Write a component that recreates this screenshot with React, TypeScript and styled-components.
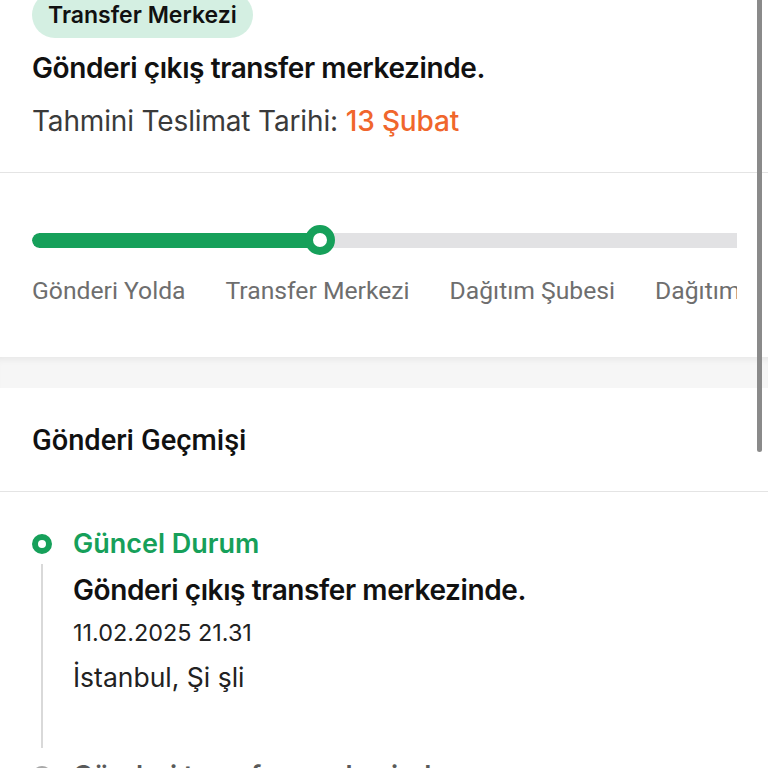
import React from "react";
import styled, { createGlobalStyle } from "styled-components";

const GlobalStyle = createGlobalStyle`
  html, body {
    margin: 0;
    padding: 0;
    background: #ffffff;
    overflow: hidden;
  }
  body {
    font-family: "Inter", "Noto Sans", sans-serif;
    color: #111111;
  }
`;

const steps = ["Gönderi Yolda", "Transfer Merkezi", "Dağıtım Şubesi", "Dağıtımda", "Teslim Edildi"];

const Page = styled.div`
  position: relative;
  width: 768px;
  height: 776px;
  margin-top: -8px;
  overflow: hidden;
  background: #ffffff;
`;

const Summary = styled.section`
  display: flex;
  flex-direction: column;
  align-items: flex-start;
  padding: 0 32px 36px;
  border-bottom: 1px solid #e4e4e4;
`;

const Badge = styled.span`
  display: inline-block;
  height: 46px;
  line-height: 46px;
  padding: 0 16px;
  border-radius: 23px;
  background: #d4efe2;
  font-size: 23px;
  font-weight: 600;
  color: #111111;
`;

const Title = styled.h2`
  margin: 15px 0 0;
  font-size: 28px;
  line-height: 30px;
  letter-spacing: -0.4px;
  font-weight: 600;
  color: #111111;
`;

const EtaLine = styled.p`
  margin: 23px 0 0;
  font-size: 28px;
  line-height: 30px;
  letter-spacing: -0.15px;
  font-weight: 400;
  color: #3a3a3a;
`;

const EtaDate = styled.span`
  color: #f0662c;
  font-weight: 500;
`;

const StepperSection = styled.section`
  padding: 52px 31px 52px 32px;
`;

const TrackArea = styled.div`
  position: relative;
  height: 30px;
  display: flex;
  align-items: center;
`;

const Track = styled.div`
  width: 100%;
  height: 15px;
  border-radius: 8px 0 0 8px;
  background: #e2e2e4;
  overflow: hidden;
`;

const TrackFill = styled.div`
  height: 100%;
  background: #16a05a;
  border-radius: 8px 0 0 8px;
`;

const Knob = styled.span`
  position: absolute;
  top: 0;
  width: 30px;
  height: 30px;
  box-sizing: border-box;
  border-radius: 50%;
  border: 8px solid #16a05a;
  background: #ffffff;
`;

const StepLabels = styled.div`
  display: flex;
  gap: 40px;
  margin-top: 22px;
  overflow: hidden;
  white-space: nowrap;
`;

const StepLabel = styled.span`
  flex: none;
  font-family: "Roboto", "Inter", sans-serif;
  font-size: 24.7px;
  line-height: 28px;
  color: #6e6e6e;
`;

const Band = styled.div`
  height: 31px;
  background: #f6f6f6;
  box-shadow: inset 0 7px 7px -5px rgba(0, 0, 0, 0.07);
`;

const HistoryHeader = styled.div`
  padding: 36px 32px 35px;
  border-bottom: 1px solid #e4e4e4;
`;

const HistoryTitle = styled.h3`
  margin: 0;
  font-family: "Roboto", "Inter", sans-serif;
  font-size: 29px;
  line-height: 32px;
  font-weight: 500;
  color: #111111;
`;

const Timeline = styled.div`
  padding: 37px 32px 0;
`;

const Item = styled.div<{ $last?: boolean }>`
  display: grid;
  grid-template-columns: 20px 1fr;
  column-gap: 21px;
  padding-bottom: ${({ $last }) => ($last ? "0" : "69px")};
`;

const Rail = styled.div<{ $last?: boolean }>`
  display: flex;
  flex-direction: column;
  align-items: center;
  grid-row: 1 / span 4;
  margin-bottom: ${({ $last }) => ($last ? "0" : "-56px")};
`;

const Dot = styled.span<{ $active?: boolean }>`
  flex: none;
  margin-top: 5px;
  width: 20px;
  height: 20px;
  box-sizing: border-box;
  border-radius: 50%;
  border: 6px solid ${({ $active }) => ($active ? "#16a05a" : "#a8a8a8")};
  background: #ffffff;
`;

const Line = styled.span`
  flex: 1;
  width: 2px;
  margin-top: 10px;
  background: #d9d9d9;
`;

const ItemLabel = styled.div<{ $active?: boolean }>`
  font-size: 27px;
  line-height: 30px;
  font-weight: 600;
  color: ${({ $active }) => ($active ? "#16a05a" : "#5a5a5a")};
`;

const ItemTitle = styled.div`
  margin-top: 16px;
  font-size: 28px;
  line-height: 30px;
  letter-spacing: -0.4px;
  font-weight: 600;
  color: #111111;
`;

const ItemDate = styled.div`
  margin-top: 14px;
  font-size: 23.4px;
  line-height: 28px;
  color: #222222;
`;

const ItemPlace = styled.div`
  margin-top: 15px;
  font-size: 26.5px;
  line-height: 30px;
  color: #222222;
`;

const ScrollThumb = styled.span`
  position: absolute;
  top: 0;
  right: 6px;
  width: 5px;
  height: 460px;
  border-radius: 0 0 3px 3px;
  background: #8a8a8a;
`;

export default function App() {
  const fillWidth = 288;
  return (
    <>
      <GlobalStyle />
      <Page>
        <Summary>
          <Badge>Transfer Merkezi</Badge>
          <Title>Gönderi çıkış transfer merkezinde.</Title>
          <EtaLine>
            Tahmini Teslimat Tarihi: <EtaDate>13 Şubat</EtaDate>
          </EtaLine>
        </Summary>

        <StepperSection>
          <TrackArea>
            <Track>
              <TrackFill style={{ width: fillWidth }} />
            </Track>
            <Knob style={{ left: fillWidth - 15 }} />
          </TrackArea>
          <StepLabels>
            {steps.map((s) => (
              <StepLabel key={s}>{s}</StepLabel>
            ))}
          </StepLabels>
        </StepperSection>

        <Band />

        <HistoryHeader>
          <HistoryTitle>Gönderi Geçmişi</HistoryTitle>
        </HistoryHeader>

        <Timeline>
          <Item>
            <Rail>
              <Dot $active />
              <Line />
            </Rail>
            <ItemLabel $active>Güncel Durum</ItemLabel>
            <ItemTitle>Gönderi çıkış transfer merkezinde.</ItemTitle>
            <ItemDate>11.02.2025 21.31</ItemDate>
            <ItemPlace>İstanbul, Şi şli</ItemPlace>
          </Item>
          <Item $last>
            <Rail $last>
              <Dot />
            </Rail>
            <ItemLabel>Gönderi transfer merkezinde.</ItemLabel>
          </Item>
        </Timeline>

        <ScrollThumb />
      </Page>
    </>
  );
}
